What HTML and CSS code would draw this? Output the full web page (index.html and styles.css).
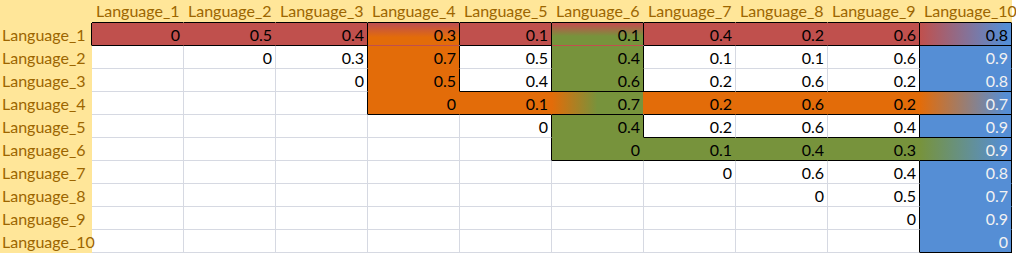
FILE: index.html
```html
<!DOCTYPE html>
<html>
<head>
<meta charset="utf-8">
<link rel="stylesheet" href="styles.css">
</head>
<body>
<div class="sheet">
  <div class="c hd"></div>
  <div class="c hd kb">Language_1</div>
  <div class="c hd kb">Language_2</div>
  <div class="c hd kb">Language_3</div>
  <div class="c hd kb">Language_4</div>
  <div class="c hd kb">Language_5</div>
  <div class="c hd kb">Language_6</div>
  <div class="c hd kb">Language_7</div>
  <div class="c hd kb">Language_8</div>
  <div class="c hd kb">Language_9</div>
  <div class="c hd kb">Language_10</div>

  <div class="c rh kr">Language_1</div>
  <div class="c red kb">0</div>
  <div class="c red kb">0.5</div>
  <div class="c red kb kr">0.4</div>
  <div class="c r-o kr">0.3</div>
  <div class="c red kb kr">0.1</div>
  <div class="c r-g kr">0.1</div>
  <div class="c red kb">0.4</div>
  <div class="c red kb">0.2</div>
  <div class="c red kb kr">0.6</div>
  <div class="c r-b kb kr">0.8</div>

  <div class="c rh">Language_2</div>
  <div class="c"></div>
  <div class="c">0</div>
  <div class="c kr">0.3</div>
  <div class="c org kr">0.7</div>
  <div class="c kr">0.5</div>
  <div class="c grn kr">0.4</div>
  <div class="c">0.1</div>
  <div class="c">0.1</div>
  <div class="c kr">0.6</div>
  <div class="c blu kr">0.9</div>

  <div class="c rh">Language_3</div>
  <div class="c"></div>
  <div class="c"></div>
  <div class="c kr">0</div>
  <div class="c org kr">0.5</div>
  <div class="c kr kb">0.4</div>
  <div class="c grn kr kb">0.6</div>
  <div class="c kb">0.2</div>
  <div class="c kb">0.6</div>
  <div class="c kb kr">0.2</div>
  <div class="c blu kb kr">0.8</div>

  <div class="c rh">Language_4</div>
  <div class="c"></div>
  <div class="c"></div>
  <div class="c kr"></div>
  <div class="c org kb">0</div>
  <div class="c org kb">0.1</div>
  <div class="c o-g kb">0.7</div>
  <div class="c org kb">0.2</div>
  <div class="c org kb">0.6</div>
  <div class="c org kb">0.2</div>
  <div class="c o-b kb kr light">0.7</div>

  <div class="c rh">Language_5</div>
  <div class="c"></div>
  <div class="c"></div>
  <div class="c"></div>
  <div class="c"></div>
  <div class="c kr">0</div>
  <div class="c grn kr">0.4</div>
  <div class="c kb">0.2</div>
  <div class="c kb">0.6</div>
  <div class="c kb kr">0.4</div>
  <div class="c blu kb kr">0.9</div>

  <div class="c rh">Language_6</div>
  <div class="c"></div>
  <div class="c"></div>
  <div class="c"></div>
  <div class="c"></div>
  <div class="c kr"></div>
  <div class="c grn kb">0</div>
  <div class="c grn kb">0.1</div>
  <div class="c grn kb">0.4</div>
  <div class="c grn kb">0.3</div>
  <div class="c g-b kb kr light">0.9</div>

  <div class="c rh">Language_7</div>
  <div class="c"></div>
  <div class="c"></div>
  <div class="c"></div>
  <div class="c"></div>
  <div class="c"></div>
  <div class="c"></div>
  <div class="c">0</div>
  <div class="c">0.6</div>
  <div class="c kr">0.4</div>
  <div class="c blu kr">0.8</div>

  <div class="c rh">Language_8</div>
  <div class="c"></div>
  <div class="c"></div>
  <div class="c"></div>
  <div class="c"></div>
  <div class="c"></div>
  <div class="c"></div>
  <div class="c"></div>
  <div class="c">0</div>
  <div class="c kr">0.5</div>
  <div class="c blu kr">0.7</div>

  <div class="c rh">Language_9</div>
  <div class="c"></div>
  <div class="c"></div>
  <div class="c"></div>
  <div class="c"></div>
  <div class="c"></div>
  <div class="c"></div>
  <div class="c"></div>
  <div class="c"></div>
  <div class="c kr">0</div>
  <div class="c blu kr">0.9</div>

  <div class="c rh">Language_10</div>
  <div class="c"></div>
  <div class="c"></div>
  <div class="c"></div>
  <div class="c"></div>
  <div class="c"></div>
  <div class="c"></div>
  <div class="c"></div>
  <div class="c"></div>
  <div class="c kr"></div>
  <div class="c blu kr kb">0</div>
</div>
</body>
</html>
```
FILE: styles.css
```css
html, body {
  margin: 0;
  padding: 0;
  background: #ffffff;
}

.sheet {
  display: grid;
  grid-template-columns: repeat(11, 92px);
  grid-auto-rows: 23px;
  font-family: "Lato", sans-serif;
  font-size: 16px;
  color: #000000;
}

.c {
  box-sizing: border-box;
  border-right: 1px solid #d6d9e2;
  border-bottom: 1px solid #d6d9e2;
  padding: 3px 3px 0 2px;
  line-height: 18px;
  text-align: right;
  white-space: nowrap;
  overflow: visible;
}

.hd {
  background: #ffe699;
  color: #9c6500;
  text-align: left;
  padding: 2px 0 0 4px;
  border-color: #ffe699;
}

.rh {
  background: #ffe699;
  color: #9c6500;
  text-align: left;
  padding-left: 2px;
  border-color: #ffe699;
  position: relative;
  z-index: 1;
}

.red { background: #c0504d; border-color: transparent; }
.org { background: #e36c09; border-color: transparent; }
.grn { background: #77933c; border-color: transparent; }
.blu { background: #558ed5; border-color: transparent; color: #f2f2f2; }

.r-o { background: linear-gradient(to bottom, #c0504d 5%, #e36c09 65%); border-color: transparent; }
.r-g { background: linear-gradient(to bottom, #c0504d 5%, #77933c 60%); border-color: transparent; }
.o-g { background: linear-gradient(to right, #e36c09 0%, #77933c 50%); border-color: transparent; }
.r-b { background: linear-gradient(to right, #c0504d 0%, #558ed5 95%); border-color: transparent; }
.o-b { background: linear-gradient(to right, #e36c09 0%, #558ed5 95%); border-color: transparent; }
.g-b { background: linear-gradient(to right, #77933c 0%, #558ed5 95%); border-color: transparent; }

.light { color: #f2f2f2; }

.kr { border-right-color: #000000; }
.kb { border-bottom-color: #000000; }
```
